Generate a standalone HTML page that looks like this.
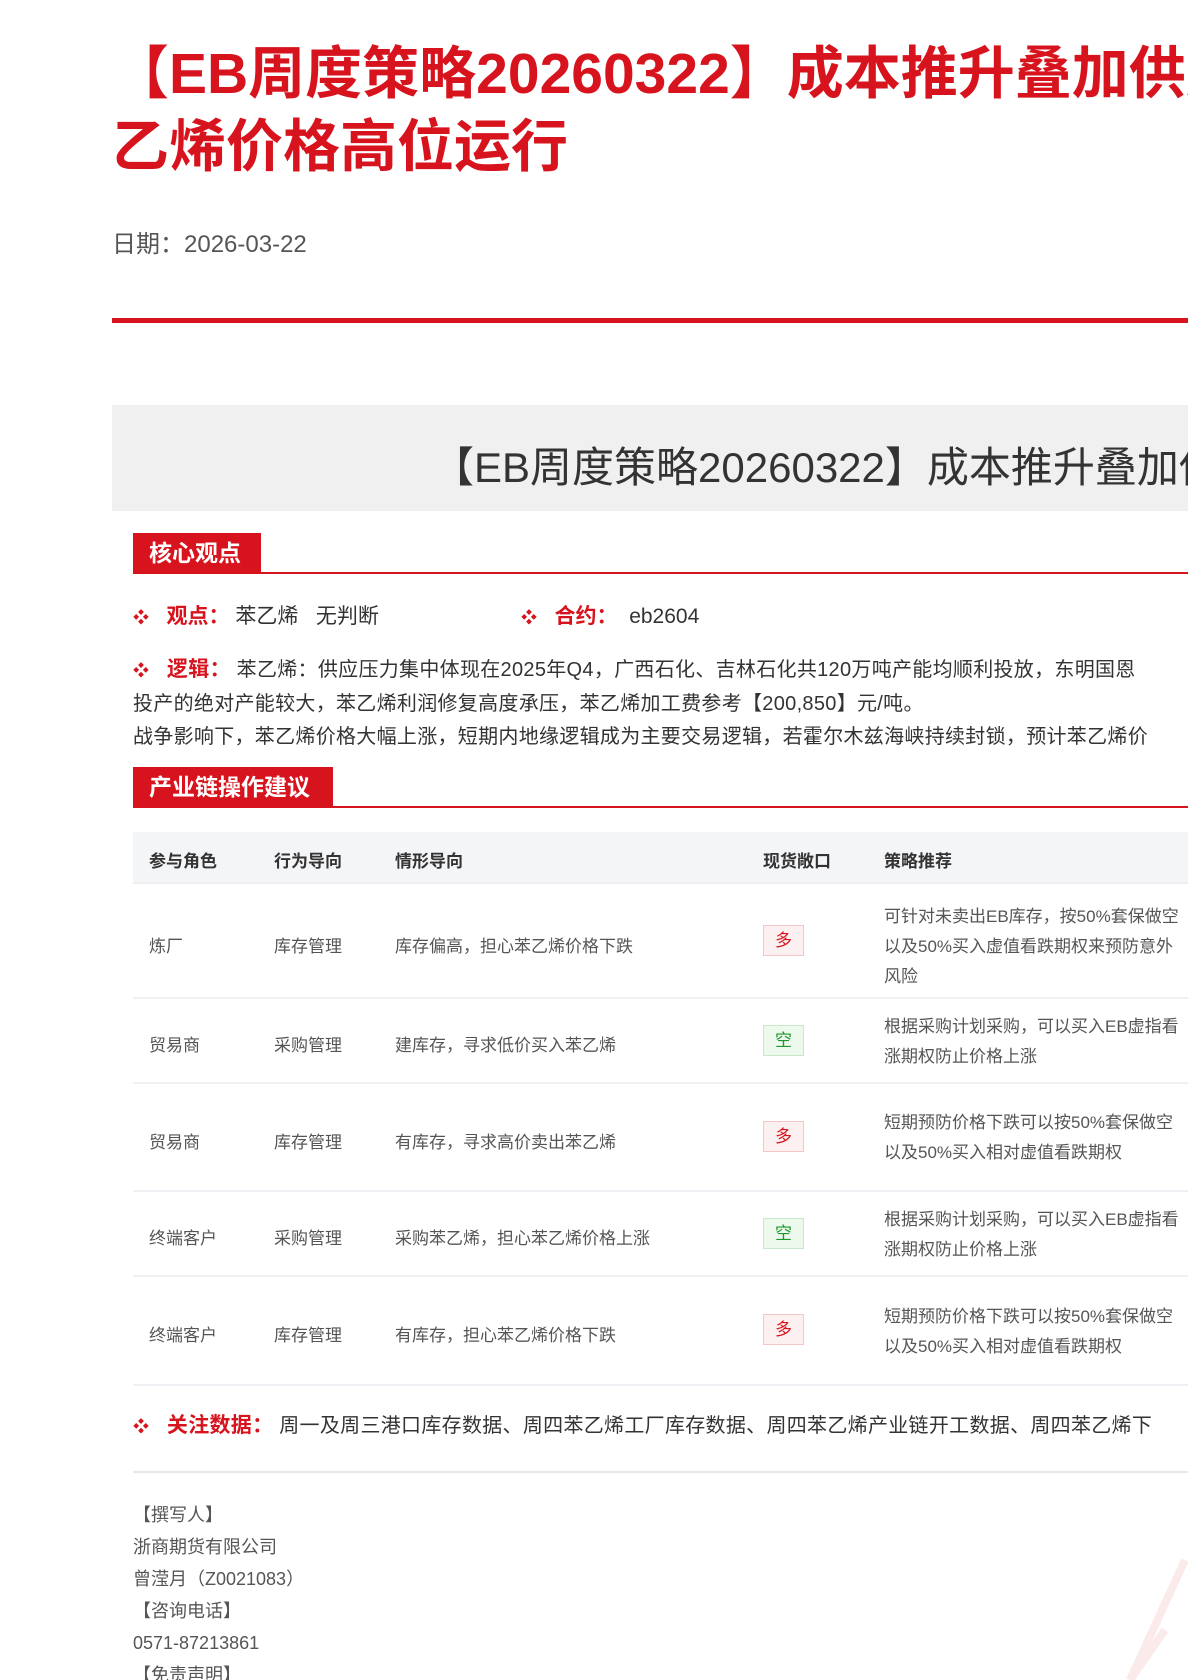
<!DOCTYPE html>
<html><head><meta charset="utf-8"><style>
*{margin:0;padding:0;box-sizing:border-box}
html,body{width:1188px;height:1680px;overflow:hidden;background:#fff}
body{font-family:"Liberation Sans","Noto Sans CJK SC",sans-serif;color:#333}
#w{position:relative;width:1188px;height:1680px;overflow:hidden}
.a{position:absolute;white-space:nowrap}
.t{left:112px;font-size:57px;font-weight:bold;color:#d7141e;line-height:72px}
.tag{background:#d7141e;color:#fff;font-size:23px;font-weight:bold;line-height:40px;padding-left:16px}
.rl{position:absolute;left:133px;right:0;height:2px;background:#d7141e}
.b{color:#d7141e;font-size:16px}
.lab{color:#d7141e;font-weight:bold}
.row{position:absolute;left:133px;right:0;border-bottom:2px solid #eef0f3}
.c{position:absolute;white-space:nowrap;font-size:17px;color:#555}
.bd{position:absolute;left:763px;width:41px;height:31px;font-size:17px;text-align:center;line-height:29px;border:1px solid}
.dup{color:#d7141e;background:#fdf0f0;border-color:#f5c6c6}
.kong{color:#1a9a2a;background:#eef9ee;border-color:#c6eac9}
.f{left:133px;font-size:18px;color:#555}
</style></head><body><div id="w">
<div class="a t" style="top:38px">【EB周度策略20260322】成本推升叠加供应</div>
<div class="a t" style="top:111px">乙烯价格高位运行</div>
<div class="a" style="left:112px;top:224px;font-size:24px;color:#555">日期：2026-03-22</div>
<div style="position:absolute;left:112px;right:0;top:318px;height:5px;background:#d7141e"></div>
<div style="position:absolute;left:112px;right:0;top:405px;height:106px;background:#f0f0f0"></div>
<div class="a" style="left:432px;top:434px;font-size:42px;color:#333">【EB周度策略20260322】成本推升叠加供应</div>
<div class="a tag" style="left:133px;top:533px;width:128px">核心观点</div>
<div class="rl" style="top:572px"></div>
<div class="a" style="left:133px;top:600px;font-size:21px"><span class="b">❖</span>&nbsp;&nbsp;&nbsp;<span class="lab">观点：</span>&nbsp;苯乙烯&nbsp;&nbsp;&nbsp;无判断</div>
<div class="a" style="left:521px;top:600px;font-size:21px"><span class="b">❖</span>&nbsp;&nbsp;&nbsp;<span class="lab">合约：</span>&nbsp;&nbsp;eb2604</div>
<div class="a" style="left:133px;top:653px;font-size:20px;line-height:33px;letter-spacing:0.3px"><span class="b">❖</span>&nbsp;&nbsp;&nbsp;<span class="lab" style="font-size:21px">逻辑：</span>&nbsp;苯乙烯：供应压力集中体现在2025年Q4，广西石化、吉林石化共120万吨产能均顺利投放，东明国恩<br>投产的绝对产能较大，苯乙烯利润修复高度承压，苯乙烯加工费参考【200,850】元/吨。<br>战争影响下，苯乙烯价格大幅上涨，短期内地缘逻辑成为主要交易逻辑，若霍尔木兹海峡持续封锁，预计苯乙烯价</div>
<div class="a tag" style="left:133px;top:767px;width:200px">产业链操作建议</div>
<div class="rl" style="top:806px"></div>
<div style="position:absolute;left:133px;right:0;top:832px;height:52px;background:#f4f5f7;border-bottom:2px solid #eceef1"></div>
<div class="c" style="left:149px;top:847px;font-weight:bold;color:#333">参与角色</div>
<div class="c" style="left:274px;top:847px;font-weight:bold;color:#333">行为导向</div>
<div class="c" style="left:395px;top:847px;font-weight:bold;color:#333">情形导向</div>
<div class="c" style="left:763px;top:847px;font-weight:bold;color:#333">现货敞口</div>
<div class="c" style="left:884px;top:847px;font-weight:bold;color:#333">策略推荐</div>

<div class="row" style="top:884px;height:115px"></div>
<div class="c" style="left:149px;top:932px">炼厂</div><div class="c" style="left:274px;top:932px">库存管理</div><div class="c" style="left:395px;top:932px">库存偏高，担心苯乙烯价格下跌</div>
<div class="bd dup" style="top:925px">多</div>
<div class="c" style="left:884px;top:902px;line-height:30px">可针对未卖出EB库存，按50%套保做空<br>以及50%买入虚值看跌期权来预防意外<br>风险</div>

<div class="row" style="top:999px;height:85px"></div>
<div class="c" style="left:149px;top:1031px">贸易商</div><div class="c" style="left:274px;top:1031px">采购管理</div><div class="c" style="left:395px;top:1031px">建库存，寻求低价买入苯乙烯</div>
<div class="bd kong" style="top:1025px">空</div>
<div class="c" style="left:884px;top:1012px;line-height:30px">根据采购计划采购，可以买入EB虚指看<br>涨期权防止价格上涨</div>

<div class="row" style="top:1084px;height:108px"></div>
<div class="c" style="left:149px;top:1128px">贸易商</div><div class="c" style="left:274px;top:1128px">库存管理</div><div class="c" style="left:395px;top:1128px">有库存，寻求高价卖出苯乙烯</div>
<div class="bd dup" style="top:1121px">多</div>
<div class="c" style="left:884px;top:1108px;line-height:30px">短期预防价格下跌可以按50%套保做空<br>以及50%买入相对虚值看跌期权</div>

<div class="row" style="top:1192px;height:85px"></div>
<div class="c" style="left:149px;top:1224px">终端客户</div><div class="c" style="left:274px;top:1224px">采购管理</div><div class="c" style="left:395px;top:1224px">采购苯乙烯，担心苯乙烯价格上涨</div>
<div class="bd kong" style="top:1218px">空</div>
<div class="c" style="left:884px;top:1205px;line-height:30px">根据采购计划采购，可以买入EB虚指看<br>涨期权防止价格上涨</div>

<div class="row" style="top:1277px;height:109px"></div>
<div class="c" style="left:149px;top:1321px">终端客户</div><div class="c" style="left:274px;top:1321px">库存管理</div><div class="c" style="left:395px;top:1321px">有库存，担心苯乙烯价格下跌</div>
<div class="bd dup" style="top:1314px">多</div>
<div class="c" style="left:884px;top:1302px;line-height:30px">短期预防价格下跌可以按50%套保做空<br>以及50%买入相对虚值看跌期权</div>

<div class="a" style="left:133px;top:1409px;font-size:20px;letter-spacing:0.3px"><span class="b">❖</span>&nbsp;&nbsp;&nbsp;<span class="lab" style="font-size:21px">关注数据：</span>&nbsp;周一及周三港口库存数据、周四苯乙烯工厂库存数据、周四苯乙烯产业链开工数据、周四苯乙烯下</div>
<div style="position:absolute;left:133px;right:0;top:1471px;height:2px;background:#e8e8e8"></div>
<div class="a f" style="top:1499px;line-height:32px">【撰写人】<br>浙商期货有限公司<br>曾滢月（Z0021083）<br>【咨询电话】<br>0571-87213861<br>【免责声明】</div>
<svg style="position:absolute;left:980px;top:1520px" width="208" height="160"><path d="M205 40 L150 160 M185 110 L150 160" stroke="#fbeaea" stroke-width="8" fill="none"/></svg>
</div></body></html>
